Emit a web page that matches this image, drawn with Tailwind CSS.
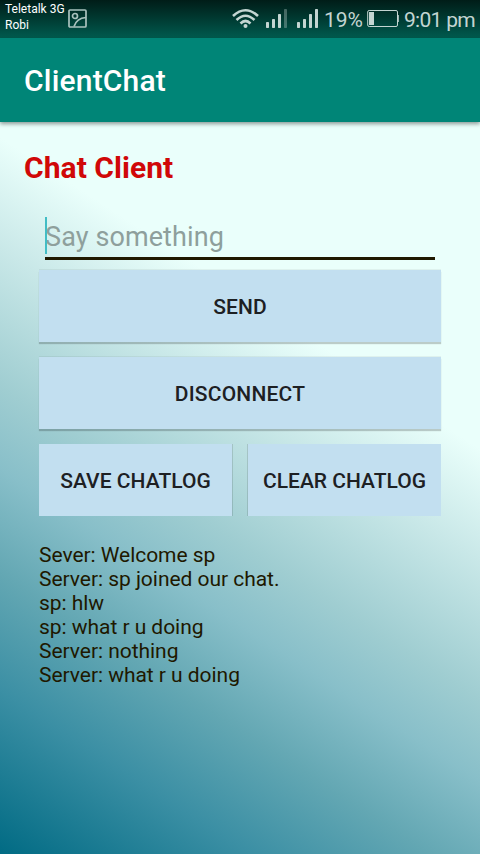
<!DOCTYPE html>
<html lang="en">
<head>
<meta charset="utf-8">
<title>ClientChat</title>
<script src="https://cdn.jsdelivr.net/npm/@tailwindcss/browser@4"></script>
</head>
<body class="w-[480px] h-[854px] overflow-hidden font-[Roboto,sans-serif]">
<div class="flex flex-col w-[480px] h-[854px] bg-[linear-gradient(33deg,#016b84_0%,#3b8fa4_14%,#63a7b3_24%,#88bfc9_33%,#9fcdd1_40%,#c9e8e8_52%,#eafffb_61.5%,#eafffb_100%)]">
  <div class="flex shrink-0 h-[38px] bg-linear-to-b from-[#001d18] to-[#005b4f] text-[#c4d5d2]">
    <div class="ml-[5px] mt-[1px] w-[60px] text-[12px] leading-[16px] text-white whitespace-nowrap">Teletalk 3G<br>Robi</div>
    <svg class="ml-[3px] mt-[9px] shrink-0" width="19" height="19" viewBox="0 0 19 19" fill="none" stroke="#a9c2be" stroke-width="1.7"><rect x="1" y="1" width="17" height="17" rx="1"/><circle cx="7" cy="7" r="2.500"/><path d="M6 17.500C7.500 12.500 11 9 18 8.500"/></svg>
    <svg class="ml-[145px] mt-[8px] shrink-0" width="27" height="21" viewBox="0 0 27 21" fill="none" stroke="#c4d5d2" stroke-width="2.6"><path d="M1 8Q13.500-3.500 26 8"/><path d="M4.500 12Q13.500 3.500 22.500 12"/><path d="M8.500 15.500Q13.500 10.500 18.500 15.500"/><circle cx="13.500" cy="18" r="2" fill="#c4d5d2" stroke="none"/></svg>
    <svg class="ml-[7px] mt-[9px] shrink-0" width="22" height="19" viewBox="0 0 22 19" fill="#c4d5d2"><rect y="13" width="3" height="6" rx=".7"/><rect x="6" y="10" width="3" height="9" rx=".7"/><rect x="12" y="5" width="3" height="14" rx=".7"/><rect x="18" width="3" height="19" rx=".7" opacity=".35"/></svg>
    <svg class="ml-[9px] mt-[9px] shrink-0" width="22" height="19" viewBox="0 0 22 19" fill="#c4d5d2"><rect y="13" width="3" height="6" rx=".7"/><rect x="6" y="10" width="3" height="9" rx=".7"/><rect x="12" y="5" width="3" height="14" rx=".7"/><rect x="18" width="3" height="19" rx=".7"/></svg>
    <div class="ml-[5px] mt-[8px] w-[43px] text-[21px] leading-[24px] whitespace-nowrap">19%</div>
    <svg class="mt-[9px] shrink-0" width="32" height="19" viewBox="0 0 32 19" fill="none" stroke="#c4d5d2"><rect x=".7" y="1.500" width="29.800" height="16" rx="1.500"/><path d="M31.300 6v7"/><path d="M2 3h5v13h-5z" fill="#c4d5d2" stroke="none"/></svg>
    <div class="ml-[5px] mt-[8px] text-[21px] leading-[24px] tracking-[-0.7px] whitespace-nowrap">9:01 pm</div>
  </div>
  <header class="flex items-center shrink-0 h-[84px] px-6 bg-[#008577] text-white text-[30px] tracking-[0.2px] font-medium shadow-[0_2px_4px_rgba(0,0,0,0.4)]">ClientChat</header>
  <main class="flex flex-col px-6">
    <h1 class="mt-[28px] h-[36px] text-[30px] leading-[36px] tracking-[0.05px] font-bold text-[#d00808]">Chat Client</h1>
    <div class="relative flex items-center mt-[31px] mx-[21px] h-[43px] border-b-3 border-[#201800] text-[27px] tracking-[0.1px] text-[#8e9f9c]">Say something<span class="absolute left-0 top-0 w-[2px] h-[37px] bg-[#42bdc5]"></span></div>
    <div class="flex flex-col gap-[15px] mt-[10px] px-[15px] text-[21px] font-medium text-[#1d2023]">
      <button class="h-[72px] pt-[4px] bg-[#c2dff0] tracking-[0.1px] shadow-[0_2px_1px_rgba(0,0,0,0.2),0_-1px_0_rgba(0,0,0,0.05)]">SEND</button>
      <button class="h-[72px] pt-[4px] bg-[#c2dff0] tracking-[0.2px] shadow-[0_2px_1px_rgba(0,0,0,0.2),0_-1px_0_rgba(0,0,0,0.05)]">DISCONNECT</button>
      <div class="grid grid-cols-2 gap-[16px]">
        <button class="h-[72px] pt-[4px] bg-[#c2dff0] tracking-[0.05px] whitespace-nowrap shadow-[1px_0_0_rgba(0,0,0,0.12)]">SAVE CHATLOG</button>
        <button class="h-[72px] pt-[4px] bg-[#c2dff0] whitespace-nowrap shadow-[-1px_0_0_rgba(0,0,0,0.12)]">CLEAR CHATLOG</button>
      </div>
    </div>
    <div class="mt-[27px] px-[15px] text-[21px] leading-[24px] tracking-[-0.04px] text-[#201800]">
      <p>Sever: Welcome sp</p><p>Server: sp joined our chat.</p><p>sp: hlw</p><p>sp: what r u doing</p><p>Server: nothing</p><p>Server: what r u doing</p>
    </div>
  </main>
</div>
</body>
</html>
